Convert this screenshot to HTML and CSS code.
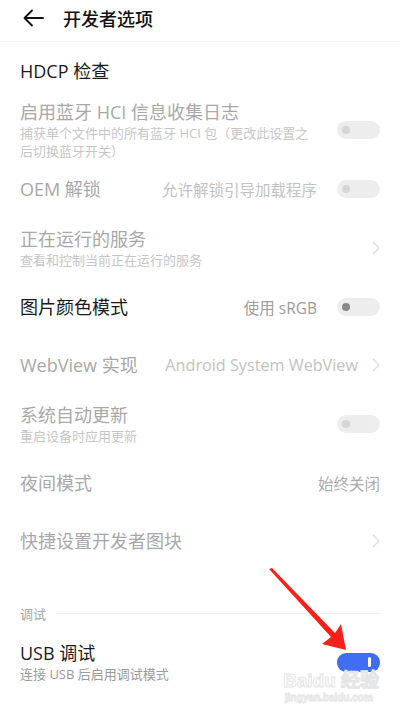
FILE: index.html
```html
<!DOCTYPE html>
<html lang="zh-CN">
<head>
    <meta charset="UTF-8">
    <meta name="viewport" content="width=device-width, initial-scale=1.0">
    <title>开发者选项</title>
    <link rel="stylesheet" href="styles.css">
</head>
<body>
    <div id="screen">
        <!-- Top bar -->
        <div class="topbar">
            <svg class="back" width="22" height="18" viewBox="0 0 22 18">
                <path d="M10 1.5 L2.5 9 L10 16.5 M2.5 9 H21" fill="none" stroke="#111" stroke-width="1.8" stroke-linecap="round" stroke-linejoin="round"/>
            </svg>
            <span class="page-title">开发者选项</span>
        </div>

        <!-- Settings list -->
        <div class="list">
            <div class="row">
                <div class="text"><div class="label">HDCP 检查</div></div>
            </div>

            <div class="row two off">
                <div class="text">
                    <div class="label">启用蓝牙 HCI 信息收集日志</div>
                    <div class="sub">捕获单个文件中的所有蓝牙 HCI 包（更改此设置之后切换蓝牙开关）</div>
                </div>
                <span class="switch"><span class="dot"></span></span>
            </div>

            <div class="row off">
                <div class="text"><div class="label">OEM 解锁</div></div>
                <span class="value">允许解锁引导加载程序</span>
                <span class="switch"><span class="dot"></span></span>
            </div>

            <div class="row two off">
                <div class="text">
                    <div class="label">正在运行的服务</div>
                    <div class="sub">查看和控制当前正在运行的服务</div>
                </div>
                <svg class="chev" width="8" height="14" viewBox="0 0 8 14"><path d="M1 1 L7 7 L1 13" fill="none" stroke="#dcdcdc" stroke-width="1.3"/></svg>
            </div>

            <div class="row">
                <div class="text"><div class="label">图片颜色模式</div></div>
                <span class="value">使用 sRGB</span>
                <span class="switch"><span class="dot dark"></span></span>
            </div>

            <div class="row off">
                <div class="text"><div class="label">WebView 实现</div></div>
                <span class="value near">Android System WebView</span>
                <svg class="chev" width="8" height="14" viewBox="0 0 8 14"><path d="M1 1 L7 7 L1 13" fill="none" stroke="#dcdcdc" stroke-width="1.3"/></svg>
            </div>

            <div class="row two off">
                <div class="text">
                    <div class="label">系统自动更新</div>
                    <div class="sub">重启设备时应用更新</div>
                </div>
                <span class="switch"><span class="dot"></span></span>
            </div>

            <div class="row off">
                <div class="text"><div class="label">夜间模式</div></div>
                <span class="value last">始终关闭</span>
            </div>

            <div class="row off">
                <div class="text"><div class="label">快捷设置开发者图块</div></div>
                <svg class="chev" width="8" height="14" viewBox="0 0 8 14"><path d="M1 1 L7 7 L1 13" fill="none" stroke="#dcdcdc" stroke-width="1.3"/></svg>
            </div>
        </div>

        <!-- Debug section -->
        <div class="section">
            <span>调试</span>
            <div class="rule"></div>
        </div>

        <div class="row two usb">
            <div class="text">
                <div class="label">USB 调试</div>
                <div class="sub">连接 USB 后启用调试模式</div>
            </div>
            <span class="switch on"><span class="bar"></span></span>
        </div>

        <!-- Annotation arrow -->
        <svg class="arrow" width="400" height="711" viewBox="0 0 400 711">
            <polygon points="269,569 272,568 335,633 341,624 346,650 322,644 331,637" fill="#f5221b"/>
        </svg>

        <!-- Watermark -->
        <div class="watermark">
            <div class="wm-logo">Bai<b>du</b> 经验</div>
            <div class="wm-url">jingyan.baidu.com</div>
        </div>
    </div>
</body>
</html>
```

FILE: styles.css
```css
/* Basic Styles */
body {
    margin: 0;
    padding: 0;
    background-color: #fff;
    font-family: "Open Sans", "Noto Sans CJK SC", sans-serif;
}

#screen {
    position: relative;
    width: 400px;
    height: 711px;
    overflow: hidden;
    background-color: #fff;
}

/* Top bar */
.topbar {
    height: 42px;
    display: flex;
    align-items: center;
    padding: 0 0 5px 22px;
    box-sizing: border-box;
    border-bottom: 1px solid #f2f2f2;
}

.back {
    margin-right: 19px;
}

.page-title {
    font-size: 18px;
    font-weight: 500;
    color: #111;
}

/* Rows */
.row {
    height: 58px;
    display: flex;
    align-items: center;
    padding: 0 20px;
    box-sizing: border-box;
}

.row.two {
    height: 60px;
}

.text {
    flex: 1;
    min-width: 0;
    margin-right: 20px;
}

.label {
    font-size: 18px;
    line-height: 24px;
    color: #1a1a1a;
}

.sub {
    font-size: 13px;
    line-height: 18px;
    color: #9a9a9a;
}

.off .label {
    color: #a8a8a8;
}

.off .sub {
    color: #c6c6c6;
}

.value {
    font-size: 15.5px;
    color: #9c9c9c;
    margin-right: 20px;
    white-space: nowrap;
}

.off .value {
    color: #c2c2c2;
}

.value.near {
    font-size: 16.2px;
    margin-right: 14px;
}

.value.last {
    margin-right: 0;
    color: #ababab;
}

/* Switches */
.switch {
    flex: none;
    width: 43px;
    height: 18px;
    border-radius: 9px;
    background-color: #ededed;
    display: flex;
    align-items: center;
}

.switch .dot {
    width: 8px;
    height: 8px;
    margin-left: 5px;
    border-radius: 50%;
    background-color: #d6d6d6;
}

.switch .dot.dark {
    background-color: #8a8a8a;
}

.switch.on {
    height: 19px;
    background-color: #3f6ef4;
    justify-content: flex-end;
}

.switch.on .bar {
    width: 3px;
    height: 10px;
    margin-right: 9px;
    border-radius: 2px;
    background-color: #fff;
}

/* Section header */
.section {
    display: flex;
    align-items: center;
    margin-top: 32px;
    padding: 0 20px;
    height: 22px;
}

.section span {
    font-size: 13px;
    color: #a6a6a6;
    margin-right: 11px;
}

.section .rule {
    flex: 1;
    height: 1px;
    background-color: #f0f0f0;
}

.usb {
    margin-top: 8px;
}

/* Overlays */
.arrow {
    position: absolute;
    left: 0;
    top: 0;
    pointer-events: none;
}

.watermark {
    position: absolute;
    left: 283px;
    top: 671px;
    color: #fff;
    -webkit-text-stroke: 1px #e6e6e6;
    font-family: "Liberation Sans", Arial, sans-serif;
    font-weight: bold;
    pointer-events: none;
}

.wm-logo {
    font-size: 19px;
    line-height: 20px;
}

.wm-logo b {
    background-color: #fff;
}

.wm-url {
    font-size: 10px;
    line-height: 14px;
    margin-left: 2px;
}
```
